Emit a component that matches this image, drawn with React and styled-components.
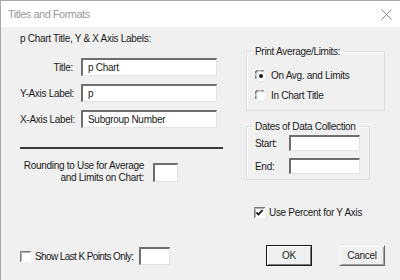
import React from 'react';
import styled, { createGlobalStyle } from 'styled-components';

const GlobalStyle = createGlobalStyle`
  html, body {
    margin: 0;
    padding: 0;
    background: #f0f0f0;
  }
  body {
    font-family: "Liberation Sans", Arial, sans-serif;
    font-size: 10px;
    letter-spacing: -0.3px;
    color: #1a1a1a;
  }
`;

const App = () => {
  return (
    <Window>
      <GlobalStyle />
      <TitleBar>
        <TitleText>Titles and Formats</TitleText>
        <CloseIcon width="11" height="11" viewBox="0 0 11 11">
          <path d="M0.5 0.5 L10.5 10.5 M10.5 0.5 L0.5 10.5" stroke="#8a8a8a" strokeWidth="1" fill="none" />
        </CloseIcon>
      </TitleBar>

      <Body>
        <LeftColumn>
          <Heading>p Chart Title, Y &amp; X Axis Labels:</Heading>
          <Fields>
            <FieldRow>
              <FieldLabel>Title:</FieldLabel>
              <TextBox width={136} value="p Chart" />
            </FieldRow>
            <FieldRow>
              <FieldLabel>Y-Axis Label:</FieldLabel>
              <TextBox width={136} value="p" />
            </FieldRow>
            <FieldRow>
              <FieldLabel>X-Axis Label:</FieldLabel>
              <TextBox width={136} value="Subgroup Number" />
            </FieldRow>
          </Fields>
          <Divider />
          <RoundingRow>
            <RoundingLabel>
              Rounding to Use for Average
              <br />
              and Limits on Chart:
            </RoundingLabel>
            <TextBox width={25} height={19} />
          </RoundingRow>
          <Spacer />
          <CheckRow>
            <CheckBox />
            <CheckText>Show Last K Points Only:</CheckText>
            <TextBox width={31} />
          </CheckRow>
        </LeftColumn>

        <RightColumn>
          <GroupBox width={139} height={66}>
            <Legend>Print Average/Limits:</Legend>
            <RadioList>
              <RadioRow>
                <Radio checked />
                <span>On Avg. and Limits</span>
              </RadioRow>
              <RadioRow>
                <Radio />
                <span>In Chart Title</span>
              </RadioRow>
            </RadioList>
          </GroupBox>

          <GroupBox width={124} height={60} second>
            <Legend>Dates of Data Collection</Legend>
            <DateGrid>
              <span>Start:</span>
              <TextBox width={71} height={16} />
              <span>End:</span>
              <TextBox width={71} height={16} />
            </DateGrid>
          </GroupBox>

          <PercentRow>
            <CheckBox checked />
            <span>Use Percent for Y Axis</span>
          </PercentRow>

          <ButtonRow>
            <DialogButton primary>OK</DialogButton>
            <DialogButton>Cancel</DialogButton>
          </ButtonRow>
        </RightColumn>
      </Body>
    </Window>
  );
};

const TextBox = ({ width, height = 18, value }) => (
  <Input $width={width} $height={height}>{value}</Input>
);

const Radio = ({ checked }) => (
  <RadioIcon width="12" height="12" viewBox="0 0 12 12">
    <circle cx="6" cy="6" r="5.5" fill="#ffffff" stroke="#e3e3e3" />
    <path d="M1.2 8.5 A5 5 0 0 1 8.5 1.2" stroke="#6e6e6e" strokeWidth="1.2" fill="none" />
    <path d="M2.2 8.2 A4 4 0 0 1 8.2 2.2" stroke="#a0a0a0" strokeWidth="1" fill="none" />
    {checked && <circle cx="6" cy="6" r="2" fill="#1a1a1a" />}
  </RadioIcon>
);

const CheckBox = ({ checked }) => (
  <CheckIcon width="11" height="11" viewBox="0 0 11 11">
    <rect x="0" y="0" width="11" height="11" fill="#ffffff" />
    <path d="M0.5 11 V0.5 H11" stroke="#7a7a7a" strokeWidth="1" fill="none" />
    <path d="M1.5 10 V1.5 H10" stroke="#b0b0b0" strokeWidth="1" fill="none" />
    {checked && (
      <path d="M2.5 5.5 L4.5 7.5 L8.5 3.2" stroke="#111" strokeWidth="1.8" fill="none" />
    )}
  </CheckIcon>
);

const Window = styled.div`
  width: 400px;
  height: 280px;
  box-sizing: border-box;
  border-left: 1px solid #a8a8a8;
  border-top: 1px solid #a8a8a8;
  background: #f0f0f0;
  display: flex;
  flex-direction: column;
  overflow: hidden;
`;

const TitleBar = styled.div`
  height: 26px;
  background: #ffffff;
  display: flex;
  align-items: center;
  justify-content: space-between;
  padding: 0 8px 0 7px;
  flex-shrink: 0;
`;

const TitleText = styled.span`
  font-size: 11px;
  letter-spacing: -0.5px;
  color: #9a9a9a;
`;

const CloseIcon = styled.svg`
  display: block;
`;

const Body = styled.div`
  flex: 1;
  display: flex;
  padding: 5px 0 0 19px;
`;

const LeftColumn = styled.div`
  width: 204px;
  display: flex;
  flex-direction: column;
`;

const Heading = styled.div`
  height: 13px;
  line-height: 13px;
`;

const Fields = styled.div`
  display: flex;
  flex-direction: column;
  gap: 8px;
  margin-top: 13px;
`;

const FieldRow = styled.div`
  display: flex;
  align-items: center;
  gap: 8px;
`;

const FieldLabel = styled.span`
  width: 53px;
  text-align: right;
  white-space: nowrap;
`;

const Input = styled.div`
  width: ${(p) => p.$width}px;
  height: ${(p) => p.$height}px;
  box-sizing: border-box;
  background: #ffffff;
  border-top: 2px solid #6e6e6e;
  border-left: 2px solid #6e6e6e;
  border-right: 1px solid #e3e3e3;
  border-bottom: 1px solid #e3e3e3;
  padding: 0 5px;
  line-height: 15px;
  white-space: nowrap;
  overflow: hidden;
  flex-shrink: 0;
`;

const Divider = styled.div`
  height: 2px;
  background: #3c3c3c;
  margin-top: 19px;
  width: 203px;
`;

const RoundingRow = styled.div`
  display: flex;
  align-items: center;
  gap: 9px;
  margin-top: 11px;
`;

const RoundingLabel = styled.div`
  width: 124px;
  text-align: right;
  line-height: 12px;
  white-space: nowrap;
`;

const Spacer = styled.div`
  flex: 1;
`;

const CheckRow = styled.div`
  display: flex;
  align-items: center;
  margin-bottom: 15px;

  svg {
    margin-right: 4px;
  }

  div {
    margin-left: 6px;
  }
`;

const CheckText = styled.span`
  white-space: nowrap;
  letter-spacing: -0.6px;
`;

const CheckIcon = styled.svg`
  display: block;
  flex-shrink: 0;
`;

const RightColumn = styled.div`
  margin-left: 22px;
  display: flex;
  flex-direction: column;
  padding-top: 13px;
`;

const GroupBox = styled.fieldset`
  width: ${(p) => p.width}px;
  height: ${(p) => p.height}px;
  box-sizing: border-box;
  margin: ${(p) => (p.second ? '9px 0 0 0' : '0')};
  padding: 0 0 0 8px;
  border: 1px solid #dcdcdc;
  box-shadow: inset 1px 1px 0 #ffffff;
`;

const Legend = styled.legend`
  padding: 0 3px 0 1px;
  margin-left: -1px;
  line-height: 13px;
  white-space: nowrap;
`;

const RadioList = styled.div`
  display: flex;
  flex-direction: column;
  gap: 7px;
  padding-top: 11px;
`;

const RadioRow = styled.div`
  display: flex;
  align-items: center;
  gap: 4px;
  height: 13px;
`;

const RadioIcon = styled.svg`
  display: block;
`;

const DateGrid = styled.div`
  display: grid;
  grid-template-columns: 34px 71px;
  row-gap: 7px;
  align-items: center;
  padding-top: 2px;
`;

const PercentRow = styled.div`
  display: flex;
  align-items: center;
  gap: 4px;
  margin: 27px 0 0 8px;
`;

const ButtonRow = styled.div`
  display: flex;
  gap: 27px;
  margin: 27px 0 0 20px;
`;

const DialogButton = styled.div`
  width: 46px;
  height: 21px;
  box-sizing: border-box;
  display: flex;
  align-items: center;
  justify-content: center;
  background: #f0f0f0;
  border: 1px solid ${(p) => (p.primary ? '#1a1a1a' : '#f0f0f0')};
  box-shadow: ${(p) =>
    p.primary
      ? 'inset 1px 1px 0 #ffffff, inset -1px -1px 0 #7a7a7a'
      : 'inset 1px 1px 0 #ffffff, inset -1px -1px 0 #a0a0a0'};
  border-right-color: ${(p) => (p.primary ? '#1a1a1a' : '#6a6a6a')};
  border-bottom-color: ${(p) => (p.primary ? '#1a1a1a' : '#6a6a6a')};
`;

export default App;
